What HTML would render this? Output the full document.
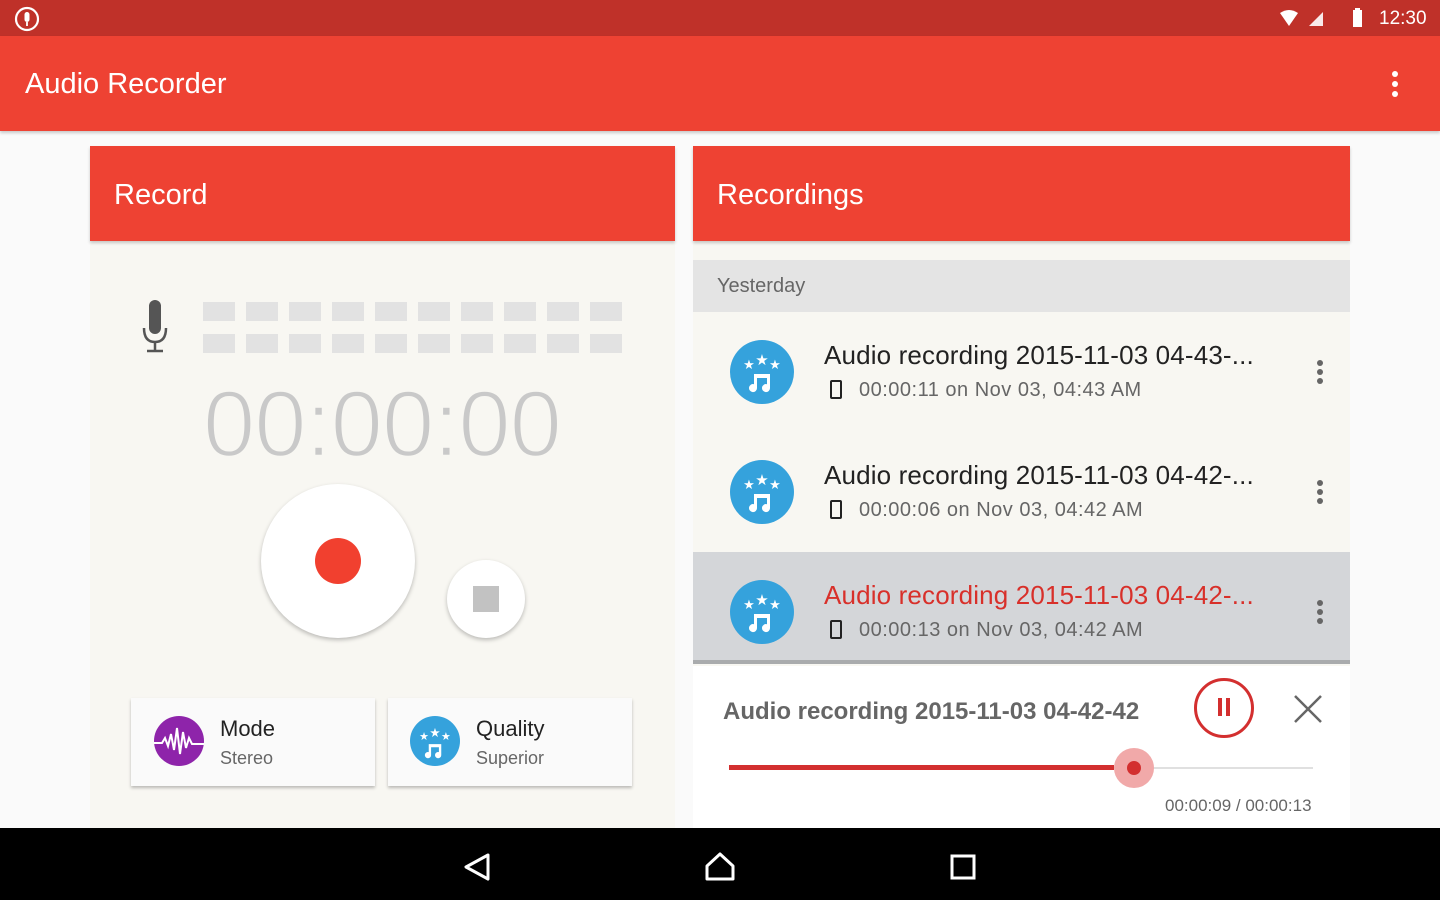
<!DOCTYPE html>
<html><head><meta charset="utf-8"><style>
*{margin:0;padding:0;box-sizing:border-box}
body{width:1440px;height:900px;position:relative;background:#fafafa;font-family:"Liberation Sans",sans-serif;overflow:hidden}
.abs{position:absolute}
.status{left:0;top:0;width:1440px;height:36px;background:#bf3129}
.appbar{left:0;top:36px;width:1440px;height:95px;background:#ee4233;box-shadow:0 2px 3px rgba(0,0,0,.2)}
.hdr{background:#ee4233;color:#fff;font-size:29px;padding:33px 0 0 24px;box-shadow:0 2px 3px rgba(0,0,0,.2)}
.blk{position:absolute;width:32px;height:19px;background:#e2e2e2}
.ttl{font-size:26px;color:#222;position:absolute;left:131px;top:28px;white-space:nowrap;letter-spacing:.15px}
.sub{font-size:20px;color:#666;position:absolute;left:166px;top:67px;white-space:nowrap;letter-spacing:.5px}
.item{position:absolute;left:0;width:657px;height:120px}
.ic{position:absolute;left:37px;top:28px;width:64px;height:64px;border-radius:50%;background:#35a2dc}
.dots{position:absolute;left:624px;top:48px;width:6px}
.dots i{display:block;width:6px;height:6px;border-radius:50%;background:#666;margin-bottom:3px}
.card{position:absolute;top:698px;width:244px;height:88px;background:#fafafa;box-shadow:0 2px 3px rgba(0,0,0,.25)}
</style></head><body>
<div class="abs status"></div>
<svg class="abs" style="left:13px;top:5px" width="28" height="28" viewBox="0 0 28 28"><circle cx="14" cy="14" r="11" fill="none" stroke="#fff" stroke-width="2.2"/><rect x="11.5" y="7" width="5" height="10" rx="2.5" fill="#fff"/><path d="M14 17v4" stroke="#fff" stroke-width="1.8"/></svg>
<svg class="abs" style="left:1278px;top:8px" width="90" height="22" viewBox="0 0 90 22"><path d="M2 5 Q11 -1 20 5 L11 18 Z" fill="#fff"/><path d="M45 4 L45 18 L31 18 Z" fill="#fff" opacity=".9"/><rect x="75" y="2" width="9" height="17" fill="#fff"/><rect x="77" y="0" width="5" height="3" fill="#fff"/></svg>
<div class="abs" style="left:1379px;top:8px;color:#fff;font-size:19px">12:30</div>
<div class="abs appbar"></div>
<div class="abs" style="left:25px;top:68px;color:#fff;font-size:29px">Audio Recorder</div>
<div class="abs" style="left:1392px;top:71px;width:6px"><i style="display:block;width:6px;height:6px;border-radius:50%;background:#fff;margin-bottom:4px"></i><i style="display:block;width:6px;height:6px;border-radius:50%;background:#fff;margin-bottom:4px"></i><i style="display:block;width:6px;height:6px;border-radius:50%;background:#fff"></i></div>

<!-- left panel -->
<div class="abs" style="left:90px;top:146px;width:585px;height:682px;background:#f8f7f2"></div>
<div class="abs hdr" style="left:90px;top:146px;width:585px;height:95px">Record</div>
<svg class="abs" style="left:141px;top:300px" width="28" height="54" viewBox="0 0 28 54"><rect x="8" y="0" width="12" height="34" rx="6" fill="#555"/><path d="M3 28 Q3 42 14 42 Q25 42 25 28" fill="none" stroke="#555" stroke-width="2.5"/><path d="M14 42v8M6 51h16" stroke="#555" stroke-width="2.5"/></svg>
<div id="meter"></div>
<div class="abs" style="left:203px;top:370px;font-size:94px;color:#c9c9c9;letter-spacing:-1px;-webkit-text-stroke:2.5px #f8f7f2">00:00:00</div>
<div class="abs" style="left:261px;top:484px;width:154px;height:154px;border-radius:50%;background:#fff;box-shadow:0 2px 4px rgba(0,0,0,.25)"></div>
<div class="abs" style="left:315px;top:538px;width:46px;height:46px;border-radius:50%;background:#f1402f"></div>
<div class="abs" style="left:447px;top:560px;width:78px;height:78px;border-radius:50%;background:#fff;box-shadow:0 2px 4px rgba(0,0,0,.25)"></div>
<div class="abs" style="left:473px;top:586px;width:26px;height:26px;background:#c2c2c2"></div>
<div class="card" style="left:131px">
 <svg class="abs" style="left:23px;top:18px" width="50" height="50" viewBox="0 0 50 50"><circle cx="25" cy="25" r="25" fill="#8e24aa"/><path d="M0 27 H8 L11 22 L14 30 L17 18 L20 34 L23 12 L26 38 L29 16 L32 32 L35 22 L38 28 H50" fill="none" stroke="#fff" stroke-width="2"/></svg>
 <div class="abs" style="left:89px;top:18px;font-size:22px;color:#222">Mode</div>
 <div class="abs" style="left:89px;top:50px;font-size:18px;color:#666">Stereo</div>
</div>
<div class="card" style="left:388px">
 <svg class="abs" style="left:22px;top:18px" width="50" height="50" viewBox="0 0 64 64"><circle cx="32" cy="32" r="32" fill="#35a2dc"/><g fill="#fff"><text x="32" y="27" font-size="16" text-anchor="middle" font-family="DejaVu Sans">★</text><text x="18" y="31" font-size="14" text-anchor="middle" font-family="DejaVu Sans">★</text><text x="46" y="31" font-size="14" text-anchor="middle" font-family="DejaVu Sans">★</text><path d="M24 36h16v14a4 4 0 1 1-3-3.8V40h-10v10a4 4 0 1 1-3-3.8z"/></g></svg>
 <div class="abs" style="left:88px;top:18px;font-size:22px;color:#222">Quality</div>
 <div class="abs" style="left:88px;top:50px;font-size:18px;color:#666">Superior</div>
</div>

<!-- right panel -->
<div class="abs" style="left:693px;top:146px;width:657px;height:682px;background:#f8f7f2"></div>
<div class="abs hdr" style="left:693px;top:146px;width:657px;height:95px">Recordings</div>
<div class="abs" style="left:693px;top:260px;width:657px;height:52px;background:#e4e4e4;color:#666;font-size:20px;padding:15px 0 0 24px">Yesterday</div>
<div class="abs" style="left:693px;top:312px;width:657px;height:354px">
 <div class="item" style="top:0"><div class="ic"></div><div class="ttl">Audio recording 2015-11-03 04-43-...</div><div class="sub">00:00:11 on Nov 03, 04:43 AM</div><div class="dots"><i></i><i></i><i></i></div></div>
 <div class="item" style="top:120px"><div class="ic"></div><div class="ttl">Audio recording 2015-11-03 04-42-...</div><div class="sub">00:00:06 on Nov 03, 04:42 AM</div><div class="dots"><i></i><i></i><i></i></div></div>
 <div class="item" style="top:240px;height:112px;background:#d4d6d9;border-bottom:4px solid #a9abad"><div class="ic"></div><div class="ttl" style="color:#d8302a">Audio recording 2015-11-03 04-42-...</div><div class="sub">00:00:13 on Nov 03, 04:42 AM</div><div class="dots"><i></i><i></i><i></i></div></div>
</div>
<div class="abs" style="left:693px;top:666px;width:657px;height:162px;background:#fff">
 <div class="abs" style="left:30px;top:32px;font-size:24px;font-weight:bold;color:#666">Audio recording 2015-11-03 04-42-42</div>
 <div class="abs" style="left:501px;top:12px;width:60px;height:60px;border-radius:50%;border:3px solid #d32f2f"></div>
 <div class="abs" style="left:525px;top:32px;width:4px;height:18px;background:#d32f2f"></div>
 <div class="abs" style="left:533px;top:32px;width:4px;height:18px;background:#d32f2f"></div>
 <svg class="abs" style="left:600px;top:28px" width="30" height="30"><path d="M2 2L28 28M28 2L2 28" stroke="#666" stroke-width="2.5"/></svg>
 <div class="abs" style="left:36px;top:99px;width:385px;height:5px;background:#d32f2f"></div>
 <div class="abs" style="left:460px;top:101px;width:160px;height:2px;background:#e0e0e0"></div>
 <div class="abs" style="left:421px;top:82px;width:40px;height:40px;border-radius:50%;background:#f1a9a9"></div>
 <div class="abs" style="left:434px;top:95px;width:14px;height:14px;border-radius:50%;background:#d32f2f"></div>
 <div class="abs" style="left:472px;top:130px;font-size:17px;color:#666">00:00:09 / 00:00:13</div>
</div>

<!-- nav -->
<div class="abs" style="left:0;top:828px;width:1440px;height:72px;background:#000"></div>
<svg class="abs" style="left:460px;top:850px" width="530" height="34" viewBox="0 0 530 34"><path d="M28 5 L6 17 L28 29 Z" fill="none" stroke="#fff" stroke-width="3" stroke-linejoin="round"/><path d="M247 16 L260 4 L273 16 V29 H247 Z" fill="none" stroke="#fff" stroke-width="3" stroke-linejoin="round"/><rect x="492" y="6" width="22" height="22" fill="none" stroke="#fff" stroke-width="3"/></svg>

<script>
var m=document.getElementById('meter'),h='';
for(var r=0;r<2;r++)for(var c=0;c<10;c++)h+='<div class="blk" style="left:'+(203+c*43)+'px;top:'+(302+r*32)+'px"></div>';
m.innerHTML=h;
var ics=document.querySelectorAll('.ic');
ics.forEach(function(e){e.innerHTML='<svg width="64" height="64" viewBox="0 0 64 64"><g fill="#fff"><text x="32" y="25" font-size="15" text-anchor="middle" font-family="DejaVu Sans">★</text><text x="19" y="29" font-size="13" text-anchor="middle" font-family="DejaVu Sans">★</text><text x="45" y="29" font-size="13" text-anchor="middle" font-family="DejaVu Sans">★</text><path d="M24 34h16v14a4 4 0 1 1-3-3.8V38h-10v10a4 4 0 1 1-3-3.8z"/></g></svg>';});
document.querySelectorAll('.sub').forEach(function(e){e.insertAdjacentHTML('beforebegin','<div style="position:absolute;left:137px;top:68px;width:12px;height:19px;border:2.5px solid #222;border-radius:2px"></div>');});
</script>
</body></html>
